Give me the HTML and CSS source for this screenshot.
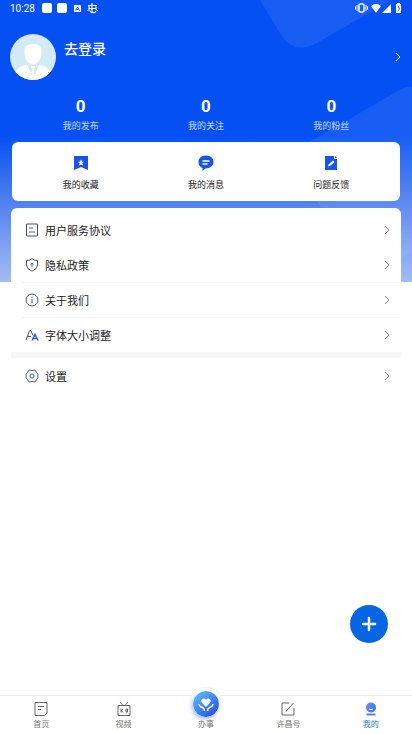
FILE: index.html
```html
<!DOCTYPE html>
<html lang="zh-CN">
<head>
<meta charset="utf-8">
<meta name="viewport" content="width=device-width, initial-scale=1">
<title>我的</title>
<link rel="stylesheet" href="styles.css">
</head>
<body>
<div class="app">
  <svg class="backdrop" viewBox="0 0 412 282" preserveAspectRatio="xMaxYMin slice" aria-hidden="true">
    <defs>
      <linearGradient id="sky" x1="0" y1="0" x2="0" y2="1">
        <stop offset="0" stop-color="#0450f2"/><stop offset=".48" stop-color="#0450f2"/>
        <stop offset=".7" stop-color="#4a7def"/><stop offset="1" stop-color="#a5bcf4"/>
      </linearGradient>
    </defs>
    <rect width="412" height="282" fill="url(#sky)"/>
    <path d="M260 0 281 35Q293 55 317 43L391 0Z" fill="#fff" fill-opacity=".08"/>
    <path d="M412 87Q406 86 398 91L311 141Q294 151 300 170L325 215Q340 240 362 281L412 252Z" fill="#fff" fill-opacity=".08"/>
  </svg>

  <div class="status">
    <time>10:28</time>
    <svg class="status-left" viewBox="0 0 58 12" aria-hidden="true">
      <rect x="1" y="1" width="10" height="10" rx="2" fill="#fff"/>
      <rect x="16" y="1" width="10" height="10" rx="2" fill="#fff"/>
      <rect x="33" y="3" width="7" height="7" rx="1" fill="#fff"/>
      <path d="M34.500 8.500 36.500 5 38.500 8.500M35.500 7.500h2" fill="none" stroke="#0450f2"/>
      <path d="M51 1v9M47 3.500h9M48 3.500v3h7v-3M46.500 8.500l2-1M49 8.500q0 2.500 5 2l1-1.500M55 7l1.500 2" fill="none" stroke="#fff" stroke-width="1.200"/>
    </svg>
    <svg class="status-right" viewBox="0 0 50 12" aria-hidden="true">
      <rect x="5" y="2" width="5" height="8" rx="1" fill="none" stroke="#fff" stroke-width="1.500"/>
      <path d="M3 3v6M12 3v6M1.500 4.500v3M13.500 4.500v3" stroke="#fff" fill="none"/>
      <path d="M17 4Q22 0 27 4L22 11ZM37 2v9h-9ZM42 2h1V1h3v1h1v9h-5Z" fill="#fff"/>
      <path d="M44.500 4v2h1l-1 3" stroke="#0450f2" stroke-width=".8" fill="none"/>
    </svg>
  </div>

  <main>
    <a class="profile" href="#login">
      <svg class="avatar" viewBox="0 0 46 46" aria-hidden="true">
        <defs><clipPath id="face"><circle cx="23" cy="23" r="23"/></clipPath></defs>
        <g clip-path="url(#face)">
          <rect width="46" height="46" fill="#d4eaf5"/>
          <path d="M14.500 17Q14 10 23 10T31.500 17Q32 25 27 29Q23 32 19 29Q14 25 14.500 17Z" fill="#fff"/>
          <path d="M5 38Q9 32 17 31L22 42 21 34 20.500 32H25.500L25 34 24 42 29 31Q37 32 41 38V46H5Z" fill="#fff"/>
          <path d="M17.500 31 21.500 41 22 35 20 31ZM28.500 31 24.500 41 24 35 26 31Z" fill="#d4eaf5"/>
        </g>
      </svg>
      <h1>去登录</h1>
      <svg class="arrow light" viewBox="0 0 6 10" aria-hidden="true"><path d="M1 1 5 5 1 9"/></svg>
    </a>

    <div class="stats">
      <a href="#posts"><strong>0</strong><span>我的发布</span></a>
      <a href="#following"><strong>0</strong><span>我的关注</span></a>
      <a href="#fans"><strong>0</strong><span>我的粉丝</span></a>
    </div>

    <nav class="shortcuts" aria-label="快捷入口">
      <a href="#favorites">
        <svg viewBox="0 0 16 16" aria-hidden="true"><path d="M1 1h14v14L8 12 1 15Z" fill="#1754ea"/><path d="M8 4.500 9 6.500l2 .3-1.500 1.500.4 2.200L8 9.500l-1.900 1 .4-2.200L5 6.800l2-.3Z" fill="#fff"/></svg>
        <span>我的收藏</span>
      </a>
      <a href="#messages">
        <svg viewBox="0 0 16 16" aria-hidden="true"><path d="M8 .5C3 .5.500 3.500.500 7s1.800 5 4 6v3l3-2.500c5 0 8-3 8-6.500S13 .5 8 .5Z" fill="#1754ea"/><path d="M4.500 6h7M4.500 9h5" stroke="#fff" stroke-width="1.300"/></svg>
        <span>我的消息</span>
      </a>
      <a href="#feedback">
        <svg viewBox="0 0 16 16" aria-hidden="true"><path d="M2 1h9v3h3v11H2Z" fill="#1754ea"/><path d="M12 1v2h2Z" fill="#1754ea"/><path d="m5 11.500.5-2L10 5.500 11.500 7 7 11Z" fill="#fff"/></svg>
        <span>问题反馈</span>
      </a>
    </nav>

    <nav class="menu" aria-label="设置菜单">
      <a href="#terms">
        <svg class="icon" viewBox="0 0 14 14" aria-hidden="true"><path d="M1.500 1h11v12h-11Z"/><path class="accent" d="M4 5h4M4 9h6"/></svg>
        <span>用户服务协议</span>
        <svg class="arrow" viewBox="0 0 6 10" aria-hidden="true"><path d="M1 1 5 5 1 9"/></svg>
      </a>
      <a href="#privacy">
        <svg class="icon" viewBox="0 0 14 14" aria-hidden="true"><path d="M7 .8Q9 2.500 12.500 2.500V7Q12.500 11 7 13.200 1.500 11 1.500 7V2.500Q5 2.500 7 .8Z"/><path class="accent" d="M7 9.500V5M5.500 6.500 7 5l1.500 1.500"/></svg>
        <span>隐私政策</span>
        <svg class="arrow" viewBox="0 0 6 10" aria-hidden="true"><path d="M1 1 5 5 1 9"/></svg>
      </a>
      <a class="ruled" href="#about">
        <svg class="icon" viewBox="0 0 14 14" aria-hidden="true"><circle cx="7" cy="7" r="6"/><path class="accent" d="M7 3.500v1.300M7 6v4.500"/></svg>
        <span>关于我们</span>
        <svg class="arrow" viewBox="0 0 6 10" aria-hidden="true"><path d="M1 1 5 5 1 9"/></svg>
      </a>
      <a class="ruled" href="#font-size">
        <svg class="icon" viewBox="0 0 14 14" aria-hidden="true"><path d="M1 12 4.500 3Q5 1.500 6 3L8 7.500M2.500 8.500H6"/><path class="accent bold" d="M7 12.500 10 6.500 13 12.500M8 10.500h4"/></svg>
        <span>字体大小调整</span>
        <svg class="arrow" viewBox="0 0 6 10" aria-hidden="true"><path d="M1 1 5 5 1 9"/></svg>
      </a>
      <hr>
      <a href="#settings">
        <svg class="icon" viewBox="0 0 14 14" aria-hidden="true"><path d="M5 1 7 1.800 9 1Q11 1.500 11.500 3.500L13 5.500Q12.400 7 13 8.500L11.500 10.500Q11 12.500 9 13L7 12.200 5 13Q3 12.500 2.500 10.500L1 8.500Q1.600 7 1 5.500L2.500 3.500Q3 1.500 5 1Z"/><circle class="accent" cx="7" cy="7" r="2"/></svg>
        <span>设置</span>
        <svg class="arrow" viewBox="0 0 6 10" aria-hidden="true"><path d="M1 1 5 5 1 9"/></svg>
      </a>
    </nav>
  </main>

  <button class="add" type="button" aria-label="添加">
    <svg viewBox="0 0 16 16" aria-hidden="true"><path d="M8 2v12M2 8h12" stroke="#fff" stroke-width="2.500" stroke-linecap="round"/></svg>
  </button>

  <nav class="tabs" aria-label="主导航">
    <a href="#home">
      <svg viewBox="0 0 16 16" aria-hidden="true"><path d="M2 1.500h12V12L11.500 14.500H2ZM5 5.500h6M5 8.500h3"/></svg>
      <span>首页</span>
    </a>
    <a href="#video">
      <svg viewBox="0 0 16 16" aria-hidden="true"><path d="M2 4.500h12v10H2ZM4 1l3 3.500M12 1 9 4.500M5 7.500v4M7 8 5.500 9.500 7 11.500M10 8h1.500v3H10Z"/></svg>
      <span>视频</span>
    </a>
    <a href="#services">
      <span class="orb">
        <svg viewBox="0 0 26 26" aria-hidden="true">
          <defs><linearGradient id="orb" x1="0" y1="0" x2=".8" y2="1"><stop offset="0" stop-color="#65caf5"/><stop offset=".5" stop-color="#438cef"/><stop offset="1" stop-color="#254fe3"/></linearGradient></defs>
          <circle cx="13" cy="13" r="13" fill="url(#orb)"/>
          <path d="M13 16 8.800 11.800Q7.500 10 9 8.200 11 6.500 13 8.700 15 6.500 17 8.200 18.500 10 17.200 11.800Z" fill="#fff"/>
          <path d="M6 13Q6.500 16 9.500 16.500 11.500 17.500 11.500 20M20 13Q19.500 16 16.500 16.500 14.500 17.500 14.500 20" fill="none" stroke="#fff" stroke-width="1.500"/>
        </svg>
      </span>
      <span>办事</span>
    </a>
    <a href="#channel">
      <svg viewBox="0 0 16 16" aria-hidden="true"><path d="M9 2H2v12h12V7M6 10.500 13.500 2"/></svg>
      <span>许昌号</span>
    </a>
    <a class="active" href="#me" aria-current="page">
      <svg viewBox="0 0 16 16" aria-hidden="true"><defs><linearGradient id="me" x1="0" y1="0" x2="1" y2="1"><stop offset="0" stop-color="#7295f7"/><stop offset="1" stop-color="#3768ef"/></linearGradient></defs><circle cx="8" cy="6.500" r="5" fill="url(#me)"/><path d="M6 8Q8 9.500 10 8" fill="none" stroke="#fff"/><path d="M3.500 13.500h9" stroke="#527ff3" stroke-width="2"/></svg>
      <span>我的</span>
    </a>
  </nav>
</div>
</body>
</html>
```
FILE: styles.css
```css
* {
  box-sizing: border-box;
}

body {
  margin: 0;
  background: #fff;
  color: #222;
  font-family: Roboto, "Noto Sans CJK SC", sans-serif;
}

a {
  color: inherit;
  text-decoration: none;
}

svg {
  display: block;
  flex: none;
}

.app {
  position: relative;
  display: flex;
  flex-direction: column;
  min-height: 100vh;
}

.backdrop {
  position: absolute;
  top: 0;
  left: 0;
  width: 100%;
  height: 282px;
}

.status {
  position: relative;
  display: flex;
  align-items: center;
  height: 16px;
  padding: 0 8px 0 10px;
  color: #fff;
  font-size: 10px;
}

.status-left {
  width: 58px;
  height: 12px;
  margin-left: 6px;
}

.status-right {
  width: 50px;
  height: 12px;
  margin-left: auto;
}

main {
  position: relative;
  flex: 1;
}

.profile {
  display: flex;
  align-items: center;
  gap: 8px;
  padding: 18px 11px 0 10px;
  color: #fff;
}

.avatar {
  width: 46px;
  height: 46px;
}

.profile h1 {
  align-self: flex-start;
  margin: 5px 0 0;
  font-size: 14px;
  font-weight: 500;
  line-height: 20px;
}

.arrow {
  width: 6px;
  height: 10px;
  margin-left: auto;
  overflow: visible;
  fill: none;
  stroke: #888;
}

.arrow.light {
  stroke: #fff;
}

.stats,
.shortcuts {
  display: grid;
  grid-template-columns: repeat(3, 1fr);
  margin: 0 12px;
  padding: 0 6px;
  font-size: 9px;
  line-height: 14px;
}

.stats a,
.shortcuts a {
  display: flex;
  flex-direction: column;
  align-items: center;
}

.stats {
  padding-top: 14px;
  padding-bottom: 9px;
  color: #fff;
}

.stats strong {
  margin-bottom: 1px;
  font-size: 17px;
  font-weight: 700;
  line-height: 24px;
}

.stats span {
  opacity: 0.75;
}

.shortcuts {
  padding-top: 13px;
  padding-bottom: 9px;
  border-radius: 6px;
  background: #fff;
}

.shortcuts a {
  gap: 7px;
}

.shortcuts svg {
  width: 16px;
  height: 16px;
}

.menu {
  margin: 7px 11px 0;
  padding-top: 4px;
  border-radius: 6px;
  background: #fff;
  font-size: 11px;
}

.menu a {
  display: flex;
  align-items: center;
  gap: 6px;
  height: 35px;
  margin-left: 11px;
  padding: 0 11px 0 3px;
}

.menu .ruled {
  border-top: 1px solid #f5f5f5;
}

.menu hr {
  height: 6px;
  margin: 0;
  border: 0;
  background: #f7f7f7;
}

.icon {
  width: 14px;
  height: 14px;
  fill: none;
  stroke: #505562;
}

.icon .accent {
  stroke: #2860dc;
}

.icon .bold {
  stroke-width: 1.5;
}

.add {
  position: fixed;
  right: 24px;
  bottom: 91px;
  display: grid;
  place-items: center;
  width: 38px;
  height: 38px;
  padding: 0;
  border: 0;
  border-radius: 50%;
  background: #0565e2;
}

.add svg {
  width: 16px;
  height: 16px;
}

.tabs {
  position: sticky;
  bottom: 0;
  display: grid;
  grid-template-columns: repeat(5, 1fr);
  grid-template-rows: 100%;
  height: 39px;
  border-top: 1px solid #ececec;
  background: #fff;
  color: #777;
  font-size: 8px;
  line-height: 12px;
}

.tabs a {
  display: flex;
  flex-direction: column;
  align-items: center;
  justify-content: flex-end;
  gap: 2px;
  padding-bottom: 3px;
}

.tabs a > svg {
  width: 16px;
  height: 16px;
  fill: none;
  stroke: #666;
}

.tabs .active {
  color: #2875c7;
}

.tabs .active svg {
  stroke: none;
}

.orb {
  margin-bottom: -3px;
  padding: 3px;
  border-radius: 50%;
  background: #fff;
  box-shadow: 0 -1px 2px #eee;
}

.orb svg {
  width: 26px;
  height: 26px;
  border-radius: 50%;
  box-shadow: -1px 2px 4px #9db8f8;
}
```
